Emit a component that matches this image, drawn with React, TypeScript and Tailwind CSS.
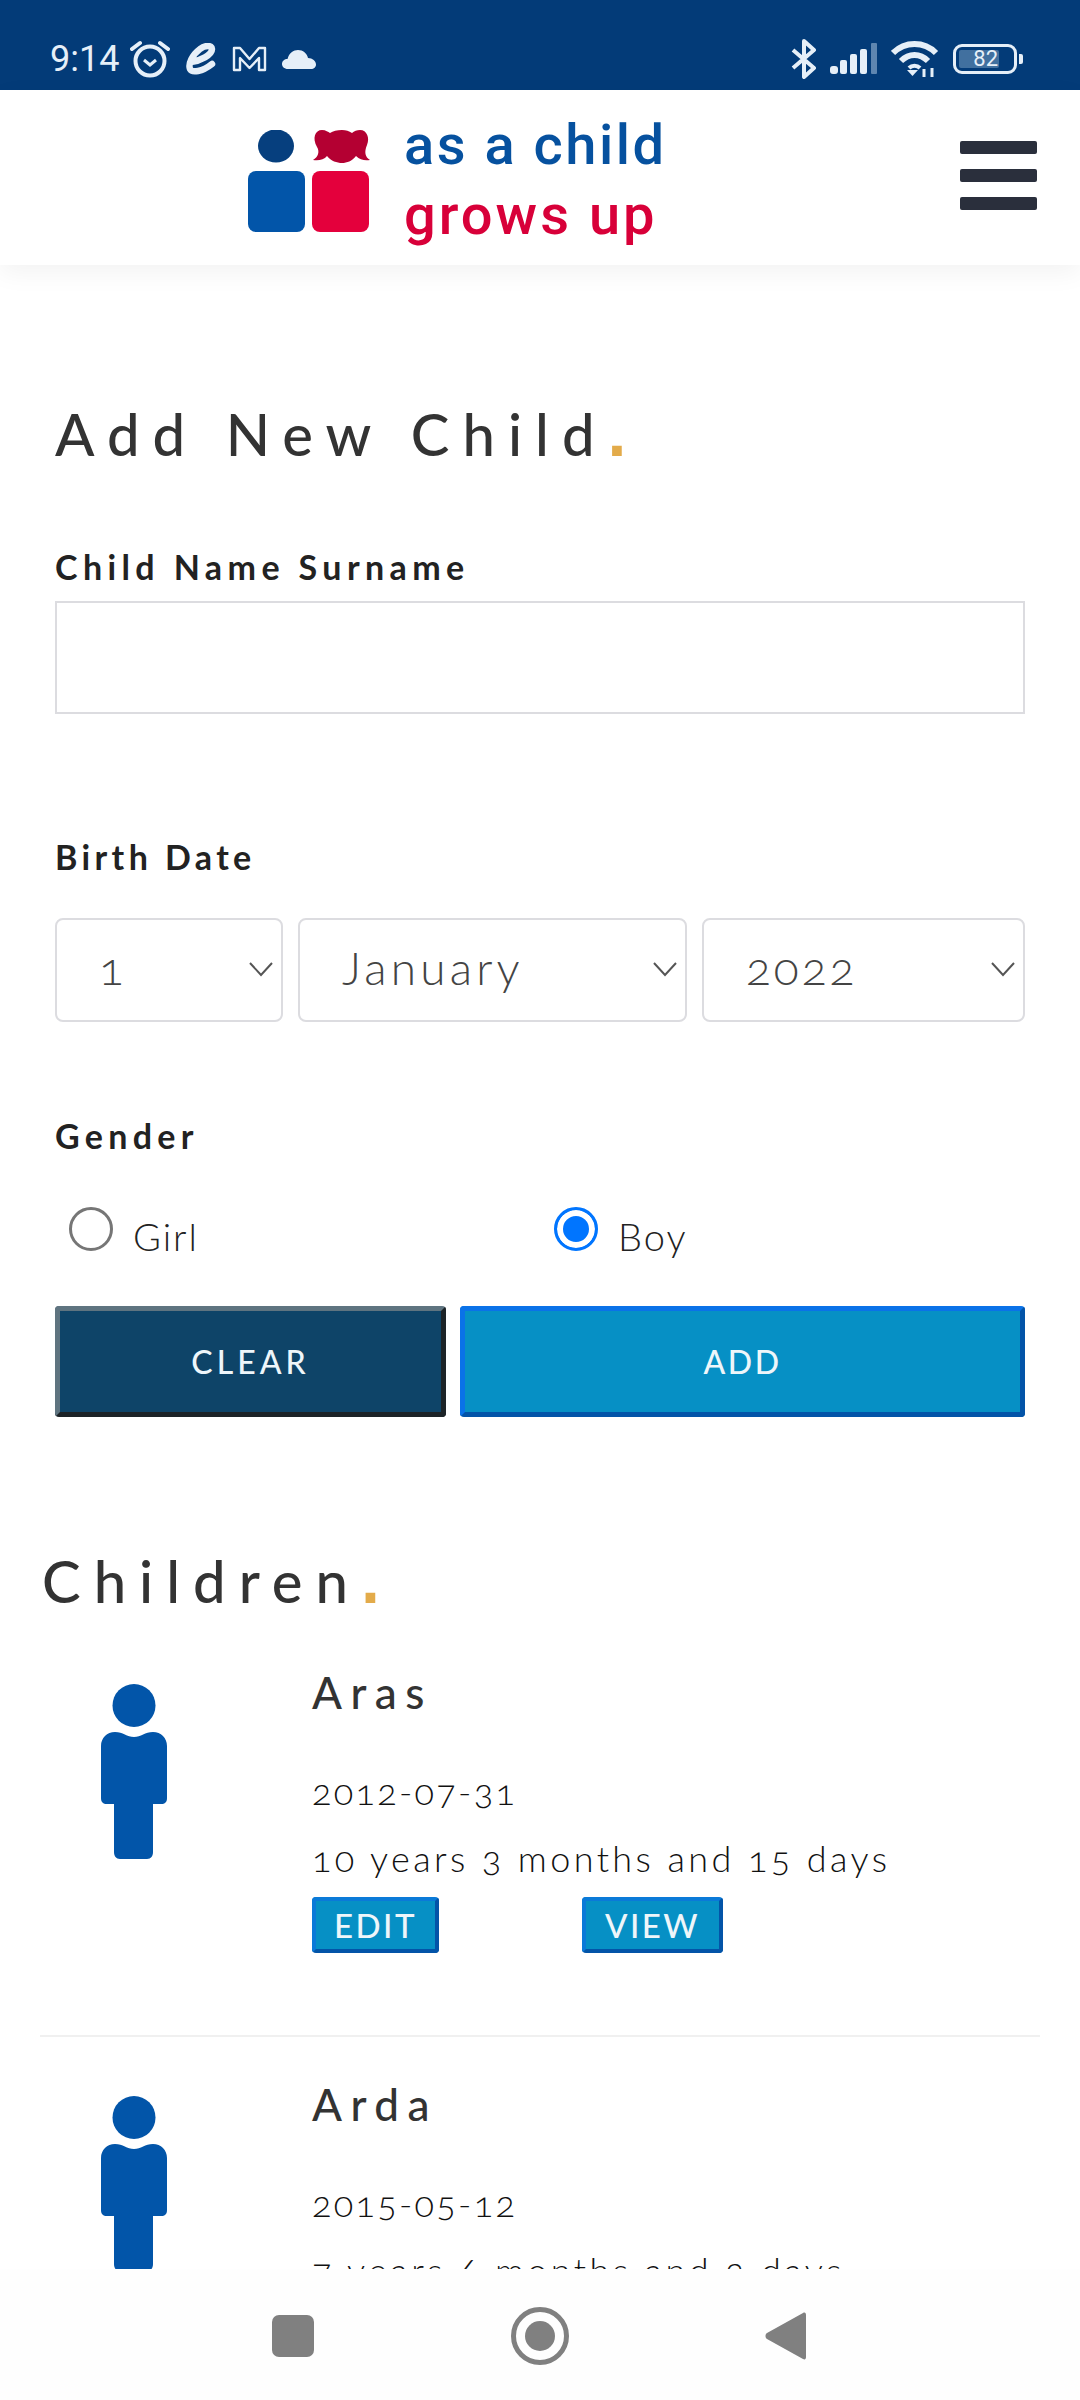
const children = [
  { name: 'Aras', born: '2012-07-31', age: '10 years 3 months and 15 days' },
  { name: 'Arda', born: '2015-05-12', age: '7 years 6 months and 2 days' },
];

function StatusBar() {
  return (
    <div className="h-[90px] shrink-0 bg-[#033b78] flex items-start justify-between pl-[50px] pr-[57px] pt-[40px] text-[#e6eff8]">
      <div className="flex items-center gap-[8px] h-[38px]">
        <span className="text-[36px] leading-none [font-family:Roboto,sans-serif] w-[72px]">9:14</span>
        <svg width="40" height="38" viewBox="0 0 40 38" fill="none" stroke="currentColor" strokeWidth="4">
          <circle cx="20" cy="21" r="14.500" />
          <path d="M14 20l6 5 6-5" strokeWidth="3" />
          <path d="M2 9l8-6M38 9l-8-6" strokeLinecap="round" />
        </svg>
        <svg className="ml-[8px]" width="30" height="32" viewBox="0 0 30 32" fill="none" stroke="currentColor" strokeWidth="6.500" strokeLinecap="round">
          <path d="M5 19C14 18 26 12 26 6C26 2 19 2 14 6C6 12 2 21 4 26C6 30 16 29 26 21" />
        </svg>
        <svg className="ml-[8px]" width="35" height="28" viewBox="0 0 35 28" fill="none" stroke="currentColor" strokeWidth="2.400" strokeLinejoin="round">
          <path d="M2 3h6l9.500 11L27 3h6v22h-6V13l-9.500 10L8 13v12H2z" />
        </svg>
        <svg className="ml-[6px]" width="36" height="20" viewBox="0 0 36 20" fill="currentColor">
          <path d="M7 20C3 20 1 17.500 1 15C1 12 3.500 10 6.500 10C8 4 12.500 1 17 1C22 1 26 4.500 27 9C31.500 9 35 12 35 15.500C35 18 33 20 30 20z" />
        </svg>
      </div>
      <div className="flex items-center h-[38px]">
        <svg width="26" height="40" viewBox="0 0 26 40" fill="none" stroke="currentColor" strokeWidth="4" strokeLinejoin="round">
          <path d="M2 11l21 18-10 9V2l10 9L2 29" />
        </svg>
        <svg className="ml-[13px]" width="48" height="32" viewBox="0 0 48 32" fill="currentColor">
          <rect x="0" y="23" width="8" height="8" rx="3" />
          <rect x="10" y="17" width="7" height="14" rx="2" />
          <rect x="20" y="11" width="7" height="20" rx="2" />
          <rect x="30" y="6" width="7" height="25" rx="2" />
          <rect x="41" y="0" width="6" height="31" rx="1" fill="#5f86b0" />
        </svg>
        <svg className="ml-[13px]" width="48" height="36" viewBox="0 0 48 36" fill="none" stroke="currentColor" strokeWidth="6">
          <path d="M2 12C14 0 33 0 45 12" />
          <path d="M10 20C18 12 29 12 37 20" />
          <path d="M18 27C21 24 26 24 29 27" strokeWidth="4" />
          <path d="M16 29h11l-5.500 6z" fill="currentColor" stroke="none" />
          <path d="M33 36v-8M41 36v-9" strokeWidth="3" />
        </svg>
        <div className="ml-[14px] relative w-[64px] h-[30px] rounded-[9px] border-[3px] border-[#e6eff8] p-[3px] pr-[15px]">
          <div className="h-full rounded-[2px] bg-[#41709f] flex items-center justify-end pr-[1px]">
            <span className="text-[22px] leading-none [font-family:Roboto,sans-serif]">82</span>
          </div>
        </div>
        <div className="ml-[2px] w-[4px] h-[10px] rounded-r-[2px] bg-[#e6eff8]" />
      </div>
    </div>
  );
}

function Logo() {
  return (
    <div className="flex items-center">
      <svg className="mt-[7px]" width="122" height="102" viewBox="0 0 122 102">
        <ellipse cx="28" cy="16" rx="18" ry="16.500" fill="#063f7e" />
        <path d="M65 30C70 27 72 22 69 17C64 8 67 0 74 0C78 0 80 2 82 3C85 1 89 0 94 0C98 0 101 1 104 3C106 1 109 0 112 0C119 0 122 8 119 15C116 22 117 27 122 30C117 31 112 30 108 26C104 31 99 33 94 33C89 33 83 31 79 26C76 30 70 31 65 30Z" fill="#b40032" />
        <rect x="0" y="41" width="57" height="61" rx="8" fill="#0255a9" />
        <rect x="64" y="41" width="57" height="61" rx="8" fill="#e4003c" />
      </svg>
      <div className="ml-[34px] mt-[5px] [font-family:Roboto,sans-serif] font-medium text-[56px] leading-[70px] tracking-[2.500px]">
        <div className="text-[#06519f]">as a child</div>
        <div className="text-[#d80039] tracking-[3px]">grows up</div>
      </div>
    </div>
  );
}

function Header() {
  return (
    <div className="relative z-10 h-[175px] shrink-0 bg-white shadow-[0_8px_24px_rgba(0,0,0,0.05)] flex items-center justify-between pl-[248px] pr-[43px]">
      <Logo />
      <div className="flex flex-col gap-[15px] -mt-[5px]">
        <div className="w-[77px] h-[13px] rounded-[2px] bg-[#2a2f3c]" />
        <div className="w-[77px] h-[13px] rounded-[2px] bg-[#2a2f3c]" />
        <div className="w-[77px] h-[13px] rounded-[2px] bg-[#2a2f3c]" />
      </div>
    </div>
  );
}

function Heading({ text, className }: { text: string; className: string }) {
  return (
    <h2 className={`h-[70px] text-[58px] leading-[70px] font-medium text-[#333] tracking-[13px] ${className}`}>
      {text}
      <span className="text-[#e3ab4a] font-bold text-[68px] leading-[0] [font-family:'Liberation_Sans',sans-serif]">.</span>
    </h2>
  );
}

function Label({ text, className }: { text: string; className: string }) {
  return <label className={`block text-[34px] leading-[40px] font-bold text-[#222] ${className}`}>{text}</label>;
}

function DateSelect({ value, className, spacing }: { value: string; className: string; spacing: string }) {
  return (
    <div className={`relative h-[104px] ${className}`}>
      <select
        defaultValue={value}
        className={`appearance-none w-full h-full rounded-[8px] border-2 border-[#dcdce0] bg-white pl-[42px] pb-[6px] text-[46px] font-light text-[#444] oldstyle-nums ${spacing}`}
      >
        <option>{value}</option>
      </select>
      <svg className="absolute right-[10px] top-[43px]" width="24" height="16" viewBox="0 0 24 16" fill="none" stroke="#555" strokeWidth="2">
        <path d="M1 2l11 12L23 2" />
      </svg>
    </div>
  );
}

function Radio({ label, checked, className }: { label: string; checked: boolean; className: string }) {
  return (
    <label className={`flex items-start ${className}`}>
      <input
        type="radio"
        name="gender"
        defaultChecked={checked}
        className="appearance-none w-[44px] h-[44px] m-0 rounded-full border-[3px] border-[#767676] bg-white checked:border-[#0075ff] checked:bg-[#0075ff] checked:shadow-[inset_0_0_0_6px_#fff]"
      />
      <span className="ml-[20px] mt-[6px] text-[38px] leading-[46px] font-light text-[#222] tracking-[2px]">{label}</span>
    </label>
  );
}

function Person() {
  return (
    <svg className="shrink-0 mt-[18px] ml-[61px]" width="66" height="175" viewBox="0 0 66 175" fill="#0255a9">
      <ellipse cx="33" cy="21.500" rx="21.500" ry="21.500" />
      <path d="M14 48C22 48 26 53 33 53C40 53 44 48 52 48C60 48 66 54 66 62V114C66 118 64 120 60 120H52V168C52 172 50 175 46 175H19C15 175 13 172 13 168V120H6C2 120 0 118 0 114V62C0 54 6 48 14 48Z" />
    </svg>
  );
}

function SmallButton({ text, className }: { text: string; className: string }) {
  return (
    <button className={`h-[56px] rounded-[4px] border-[4px] border-t-[#0a7ad8] border-l-[#0a7ad8] border-b-[#0354a8] border-r-[#0354a8] bg-[#0690c5] text-[#eef6fa] font-medium text-[33px] leading-none tracking-[2.500px] ${className}`}>
      {text}
    </button>
  );
}

function ChildRow({ name, born, age, first }: { name: string; born: string; age: string; first: boolean }) {
  return (
    <div className={`flex ${first ? 'mt-[50px] pb-[82px] border-b-2 border-[#f0f0f0]' : 'pt-[41px]'}`}>
      <Person />
      <div className="ml-[145px]">
        <div className="text-[44px] leading-[53px] font-medium text-[#333] tracking-[8.500px]">{name}</div>
        <div className="mt-[50px] text-[36px] leading-[44px] font-light text-[#111] tracking-[2.300px] oldstyle-nums">{born}</div>
        <div className="mt-[23px] text-[36px] leading-[44px] font-light text-[#111] tracking-[3.400px] oldstyle-nums">{age}</div>
        <div className="mt-[17px] flex">
          <SmallButton text="EDIT" className="w-[127px]" />
          <SmallButton text="VIEW" className="w-[141px] ml-[143px]" />
        </div>
      </div>
    </div>
  );
}

export default function App() {
  return (
    <div className="w-[1080px] h-[2400px] flex flex-col bg-white overflow-hidden [font-family:Lato,sans-serif]">
      <StatusBar />
      <Header />
      <div className="flex-1 min-h-0 overflow-hidden">
        <div className="px-[55px]">
          <Heading text="Add New Child" className="mt-[134px]" />
          <Label text="Child Name Surname" className="mt-[78px] tracking-[5.400px]" />
          <input className="block mt-[14px] w-full h-[113px] border-2 border-[#dcdce0] bg-white" />
          <Label text="Birth Date" className="mt-[123px] tracking-[4.400px]" />
          <div className="mt-[41px] flex gap-[15px]">
            <DateSelect value="1" className="w-[228px]" spacing="tracking-[2px]" />
            <DateSelect value="January" className="w-[389px]" spacing="tracking-[4.200px]" />
            <DateSelect value="2022" className="flex-1" spacing="tracking-[3px]" />
          </div>
          <Label text="Gender" className="mt-[94px] tracking-[5.300px]" />
          <div className="mt-[51px] flex h-[44px] pl-[14px]">
            <Radio label="Girl" checked={false} className="w-[485px]" />
            <Radio label="Boy" checked={true} className="" />
          </div>
          <div className="mt-[55px] flex gap-[14px]">
            <button className="w-[391px] h-[111px] rounded-[4px] border-[5px] border-t-[#5f7480] border-l-[#5f7480] border-b-[#1c2327] border-r-[#1c2327] bg-[#0e4468] text-[#eef6fa] font-medium text-[32px] tracking-[4px]">CLEAR</button>
            <button className="flex-1 h-[111px] rounded-[4px] border-[5px] border-t-[#0a72e8] border-l-[#0a72e8] border-b-[#0354a8] border-r-[#0354a8] bg-[#0690c5] text-[#eef6fa] font-medium text-[32px] tracking-[2.500px]">ADD</button>
          </div>
        </div>
        <div className="mx-[40px]">
          <Heading text="Children" className="mt-[129px] pl-[2px]" />
          {children.map((c, i) => (
            <ChildRow key={c.name} {...c} first={i === 0} />
          ))}
        </div>
      </div>
      <div className="h-[131px] shrink-0 bg-[#fefefe] flex items-center justify-between pl-[272px] pr-[274px] -mt-[2px] pt-[2px]">
        <div className="w-[42px] h-[42px] rounded-[7px] bg-[#808080]" />
        <svg width="58" height="58" viewBox="0 0 58 58" fill="#808080">
          <circle cx="29" cy="29" r="26.500" fill="none" stroke="#808080" strokeWidth="5" />
          <circle cx="29" cy="29" r="15" />
        </svg>
        <svg width="41" height="48" viewBox="0 0 41 48" fill="#808080">
          <path d="M38 1C40 0 41 1 41 3V45C41 47 40 48 38 47L2 27C0 26 0 22 2 21Z" />
        </svg>
      </div>
    </div>
  );
}
